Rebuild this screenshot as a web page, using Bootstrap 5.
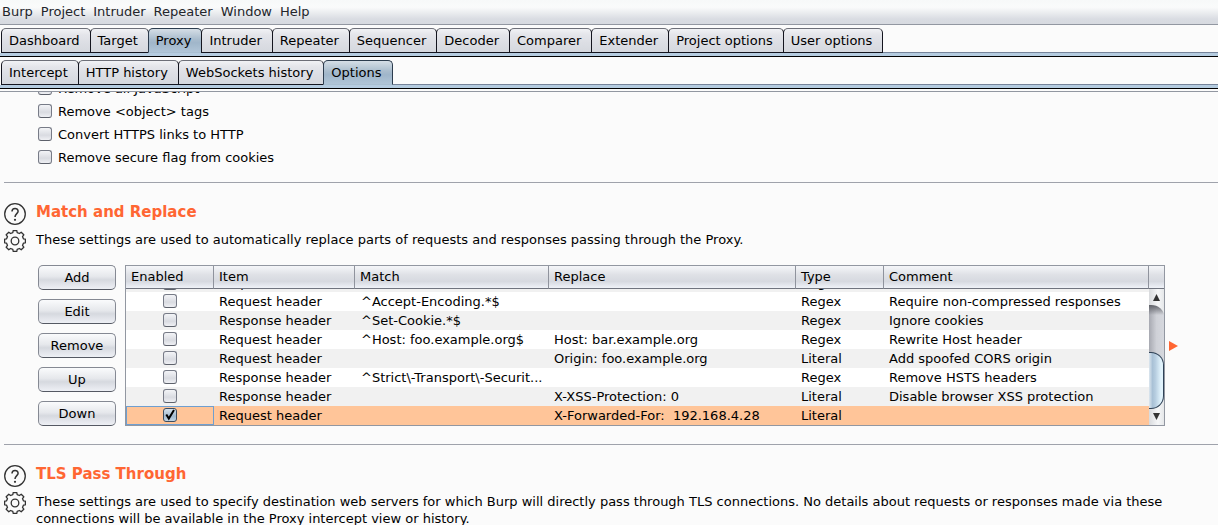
<!DOCTYPE html>
<html lang="en">
<head>
<meta charset="utf-8">
<meta name="viewport" content="width=device-width, initial-scale=1">
<title>Burp Proxy options</title>
<link href="https://cdn.jsdelivr.net/npm/bootstrap@5.3.0/dist/css/bootstrap.min.css" rel="stylesheet">
<style>
:root { --line: #9297a1; --edge: #6d6f78; --brand: #ff6633; }
body { font: 13px/17px "DejaVu Sans", sans-serif; color: #000; background: #fbfbfb; height: 100vh; overflow: hidden; }
/* menu bar */
.menubar { height: 25px; padding: 0 2px; gap: 8px; background: linear-gradient(#f7f9f9, #fafbfb 30%, #d9dce2 80%, #d7dae0); border-bottom: 1px solid var(--line); }
.menubar a { color: #23252b; text-decoration: none; line-height: 24px; }
/* tab strips */
.tabstrip { padding: 3px 0 0 1px; }
.tabstrip::after { content: ""; flex: 1; border-bottom: 1px solid #76849a; }
.tabstrip .nav-link { height: 25px; padding: 0 10px 0 7px; line-height: 23px; color: #000; border: 1px solid #14151f; border-top-color: var(--edge); border-radius: 5px 5px 0 0; background: linear-gradient(#f1f2f5, #e4e5ea 25%, #dcdee4 60%, #d5d8de); white-space: nowrap; }
.tabstrip .nav-item + .nav-item { margin-left: -1px; }
.tabstrip .nav-link.active { border-color: #2c3c4e; border-bottom-color: #a9bfd1; background: linear-gradient(#d5dee6, #a9bccd 45%, #a0b6ca 60%, #b0c5d7); }
.tabband { height: 4px; background: #b5cce0; border-bottom: 1px solid #000; }
.paneledge { height: 3px; border-bottom: 1px solid var(--line); }
/* scrolled pane */
.pane { min-height: 0; }
.scrolled { margin-top: -15px; }
.optionlist { padding: 0 0 13px 38px; }
.optionlist label { height: 23px; gap: 6px; }
.optionlist .tick { margin-bottom: 2px; }
.tick { appearance: none; flex: none; width: 14px; height: 14px; margin: 0; border: 1px solid #777b87; border-bottom-color: #5d616b; border-radius: 3px; background: linear-gradient(#f3f4f7, #d9dbe1 60%, #eff0f4); }
.tick:checked { border-color: #3d4c5e; background: linear-gradient(#d5e0ea, #a3bace 60%, #c1d4e4); }
.tickwrap { position: relative; display: block; width: 14px; height: 14px; margin: 0 auto 2px; }
.tickwrap .tick { display: block; }
.tickwrap svg { position: absolute; left: 0; top: 0; pointer-events: none; }
/* option sections */
.optsection { margin-left: 4px; border-top: 1px solid #9fa2ab; padding-bottom: 18px; }
.iconcol { width: 32px; padding-top: 20px; gap: 5px; flex: none; }
.iconbtn { width: 22px; height: 22px; padding: 0; border: 0; background: none; display: block; }
.iconbtn svg { display: block; }
.opttext { padding: 18px 53px 0 0; min-width: 0; }
.opttext h2 { font-size: 15px; line-height: 22px; font-weight: 700; color: var(--brand); margin: 0 0 8px; }
.opttext p { margin: 0; }
.editor { margin-top: 17px; gap: 9px; padding-left: 2px; }
.btncol { width: 78px; gap: 9px; flex: none; }
.btncol .btn { height: 25px; padding: 0; font-size: 13px; line-height: 23px; color: #000; border: 1px solid #858993; border-bottom-color: #555963; border-radius: 5px; background: linear-gradient(#fafbfc, #e6e8ec 45%, #d6d9df 60%, #eef0f5); }
/* rules table */
.rulebox { position: relative; border: 1px solid var(--line); min-width: 0; }
.ruletable { table-layout: fixed; width: 100%; border-collapse: separate; border-spacing: 0; background: #fff; }
.ruletable th { height: 23px; padding: 0 0 0 5px; font-weight: 400; line-height: 20px; border-right: 1px solid #8f939d; border-bottom: 1px solid #70747f; }
.ruletable th, .corner { background: linear-gradient(#f5f6f9, #dfe1e6 40%, #d6d9e0 70%, #eff2f8); }
.ruletable td { height: 19px; padding: 0 0 0 6px; line-height: 19px; white-space: pre; overflow: hidden; text-overflow: ellipsis; }
.ruletable td:first-child { padding: 0; }
.ruletable td:nth-child(n+4) { padding-left: 5px; }
.ruletable td:nth-child(2) { padding-left: 5px; }
.ruletable tbody tr:nth-child(odd) td { background: #f1f1f1; }
.ruletable tr.peek td { height: 3px; line-height: 3px; }
.peekclip { height: 3px; line-height: 19px; overflow: hidden; display: flex; align-items: flex-end; }
.ruletable tbody tr.chosen td { background: #ffc599; }
.ruletable tbody tr.chosen td:first-child { box-shadow: inset 0 0 0 1px #6f9fd0; }
.scrollcol { width: 15px; flex: none; background: linear-gradient(90deg, #d8dadd, #f6f7f8 60%, #e5e7e9); }
.corner { height: 23px; border-bottom: 1px solid #70747f; }
.scrollbtn { height: 16px; padding: 0; border: 0; background: none; line-height: 0; }
.scrolltrack { border-top-right-radius: 13px 11px; background: linear-gradient(#5f6168, rgba(120, 122, 130, 0) 10px), linear-gradient(90deg, #a7a9b1, #cfd1d7 50%, #d6d8de); background-size: 100% 10px, 100% calc(100% - 20px); background-repeat: no-repeat; }
.scrollthumb { height: 57px; border: 1px solid #2f4257; border-left: 0; border-radius: 0 13px 13px 0; background: linear-gradient(90deg, #dde7ef, #a9c1d6 25%, #b6cde0 45%, #e1f3fc 85%); }
.expander { position: absolute; left: 100%; top: 75px; margin-left: 5px; padding: 0; border: 0; background: none; width: 9px; height: 10px; line-height: 0; }
</style>
</head>
<body class="d-flex flex-column">

<svg width="0" height="0" class="position-absolute" aria-hidden="true">
  <symbol id="help" viewBox="-11 -11 22 22">
    <g fill="none" stroke="#333" stroke-width="1.3"><circle r="10.3"/>
    <path d="M-3-2.6C-3-6.6 3.1-6.6 3.1-2.7 3.1-.4 0-.2 0 3" stroke-width="1.5"/></g>
    <circle cy="5.8" r="1.1" fill="#333"/>
  </symbol>
  <symbol id="gear" viewBox="-11 -11 22 22">
    <g fill="none" stroke="#333" stroke-width="1.3" stroke-linejoin="round"><circle r="3.8"/>
    <path d="M-2.2-8.4-1.8-10.4H1.8L2.2-8.4 4.4-7.5 6.2-8.8 8.8-6.2 7.5-4.4 8.4-2.2 10.4-1.8V1.8L8.4 2.2 7.5 4.4 8.8 6.2 6.2 8.8 4.4 7.5 2.2 8.4 1.8 10.4H-1.8L-2.2 8.4-4.4 7.5-6.2 8.8-8.8 6.2-7.5 4.4-8.4 2.2-10.4 1.8V-1.8L-8.4-2.2-7.5-4.4-8.8-6.2-6.2-8.8-4.4-7.5Z"/></g>
  </symbol>
</svg>

<nav class="menubar d-flex flex-shrink-0" aria-label="Menu">
  <a href="#">Burp</a><a href="#">Project</a><a href="#">Intruder</a><a href="#">Repeater</a><a href="#">Window</a><a href="#">Help</a>
</nav>

<ul class="nav tabstrip flex-nowrap flex-shrink-0">
  <li class="nav-item"><a class="nav-link" href="#">Dashboard</a></li>
  <li class="nav-item"><a class="nav-link" href="#">Target</a></li>
  <li class="nav-item"><a class="nav-link active" href="#" aria-current="page">Proxy</a></li>
  <li class="nav-item"><a class="nav-link" href="#">Intruder</a></li>
  <li class="nav-item"><a class="nav-link" href="#">Repeater</a></li>
  <li class="nav-item"><a class="nav-link" href="#">Sequencer</a></li>
  <li class="nav-item"><a class="nav-link" href="#">Decoder</a></li>
  <li class="nav-item"><a class="nav-link" href="#">Comparer</a></li>
  <li class="nav-item"><a class="nav-link" href="#">Extender</a></li>
  <li class="nav-item"><a class="nav-link" href="#">Project options</a></li>
  <li class="nav-item"><a class="nav-link" href="#">User options</a></li>
</ul>
<div class="tabband flex-shrink-0"></div>
<ul class="nav tabstrip flex-nowrap flex-shrink-0">
  <li class="nav-item"><a class="nav-link" href="#">Intercept</a></li>
  <li class="nav-item"><a class="nav-link" href="#">HTTP history</a></li>
  <li class="nav-item"><a class="nav-link" href="#">WebSockets history</a></li>
  <li class="nav-item"><a class="nav-link active" href="#" aria-current="page">Options</a></li>
</ul>
<div class="tabband flex-shrink-0"></div>
<div class="paneledge flex-shrink-0"></div>

<main class="pane flex-grow-1 overflow-hidden">
  <div class="scrolled overflow-hidden">
    <div class="optionlist">
      <label class="d-flex align-items-center"><input class="tick" type="checkbox">Remove all JavaScript</label>
      <label class="d-flex align-items-center"><input class="tick" type="checkbox">Remove &lt;object&gt; tags</label>
      <label class="d-flex align-items-center"><input class="tick" type="checkbox">Convert HTTPS links to HTTP</label>
      <label class="d-flex align-items-center"><input class="tick" type="checkbox">Remove secure flag from cookies</label>
    </div>

    <section class="optsection d-flex">
      <div class="iconcol d-flex flex-column">
        <button class="iconbtn" type="button" aria-label="Help"><svg width="22" height="22"><use href="#help"/></svg></button>
        <button class="iconbtn" type="button" aria-label="Settings"><svg width="22" height="22"><use href="#gear"/></svg></button>
      </div>
      <div class="opttext flex-grow-1">
        <h2>Match and Replace</h2>
        <p>These settings are used to automatically replace parts of requests and responses passing through the Proxy.</p>
        <div class="editor d-flex">
          <div class="btncol d-flex flex-column">
            <button class="btn" type="button">Add</button>
            <button class="btn" type="button">Edit</button>
            <button class="btn" type="button">Remove</button>
            <button class="btn" type="button">Up</button>
            <button class="btn" type="button">Down</button>
          </div>
          <div class="rulebox d-flex flex-grow-1">
            <table class="ruletable">
              <colgroup><col style="width:88px"><col style="width:141px"><col style="width:194px"><col style="width:247px"><col style="width:88px"><col></colgroup>
              <thead><tr><th>Enabled</th><th>Item</th><th>Match</th><th>Replace</th><th>Type</th><th>Comment</th></tr></thead>
              <tbody>
                <tr class="peek"><td><div class="peekclip"><span class="tickwrap"><input class="tick" type="checkbox" aria-label="Enabled"></span></div></td><td><div class="peekclip">Request header</div></td><td></td><td></td><td><div class="peekclip">Regex</div></td><td></td></tr>
                <tr><td><span class="tickwrap"><input class="tick" type="checkbox" aria-label="Enabled"></span></td><td>Request header</td><td>^Accept-Encoding.*$</td><td></td><td>Regex</td><td>Require non-compressed responses</td></tr>
                <tr><td><span class="tickwrap"><input class="tick" type="checkbox" aria-label="Enabled"></span></td><td>Response header</td><td>^Set-Cookie.*$</td><td></td><td>Regex</td><td>Ignore cookies</td></tr>
                <tr><td><span class="tickwrap"><input class="tick" type="checkbox" aria-label="Enabled"></span></td><td>Request header</td><td>^Host: foo.example.org$</td><td>Host: bar.example.org</td><td>Regex</td><td>Rewrite Host header</td></tr>
                <tr><td><span class="tickwrap"><input class="tick" type="checkbox" aria-label="Enabled"></span></td><td>Request header</td><td></td><td>Origin: foo.example.org</td><td>Literal</td><td>Add spoofed CORS origin</td></tr>
                <tr><td><span class="tickwrap"><input class="tick" type="checkbox" aria-label="Enabled"></span></td><td>Response header</td><td>^Strict\-Transport\-Securit...</td><td></td><td>Regex</td><td>Remove HSTS headers</td></tr>
                <tr><td><span class="tickwrap"><input class="tick" type="checkbox" aria-label="Enabled"></span></td><td>Response header</td><td></td><td>X-XSS-Protection: 0</td><td>Literal</td><td>Disable browser XSS protection</td></tr>
                <tr class="chosen"><td><span class="tickwrap"><input class="tick" type="checkbox" aria-label="Enabled" checked><svg width="14" height="14"><path d="M3.300 6.500 5.800 10.500 11 2" fill="none" stroke="#000" stroke-width="2"/></svg></span></td><td>Request header</td><td></td><td>X-Forwarded-For:  192.168.4.28</td><td>Literal</td><td></td></tr>
              </tbody>
            </table>
            <div class="scrollcol d-flex flex-column">
              <div class="corner"></div>
              <button class="scrollbtn" type="button" aria-label="Scroll up"><svg width="15" height="16"><path d="M4 12 7.500 5 11 12Z" fill="#333"/></svg></button>
              <div class="scrolltrack d-flex flex-column justify-content-end flex-grow-1"><div class="scrollthumb"></div></div>
              <button class="scrollbtn" type="button" aria-label="Scroll down"><svg width="15" height="16"><path d="M4 4 7.500 11 11 4Z" fill="#333"/></svg></button>
            </div>
            <button class="expander" type="button" aria-label="Expand"><svg width="9" height="10"><path d="M0 0 9 5 0 10Z" fill="#ff6633"/></svg></button>
          </div>
        </div>
      </div>
    </section>

    <section class="optsection d-flex">
      <div class="iconcol d-flex flex-column">
        <button class="iconbtn" type="button" aria-label="Help"><svg width="22" height="22"><use href="#help"/></svg></button>
        <button class="iconbtn" type="button" aria-label="Settings"><svg width="22" height="22"><use href="#gear"/></svg></button>
      </div>
      <div class="opttext flex-grow-1">
        <h2>TLS Pass Through</h2>
        <p>These settings are used to specify destination web servers for which Burp will directly pass through TLS connections. No details about requests or responses made via these connections will be available in the Proxy intercept view or history.</p>
      </div>
    </section>
  </div>
</main>
<script src="https://cdn.jsdelivr.net/npm/bootstrap@5.3.0/dist/js/bootstrap.bundle.min.js"></script>
</body>
</html>
